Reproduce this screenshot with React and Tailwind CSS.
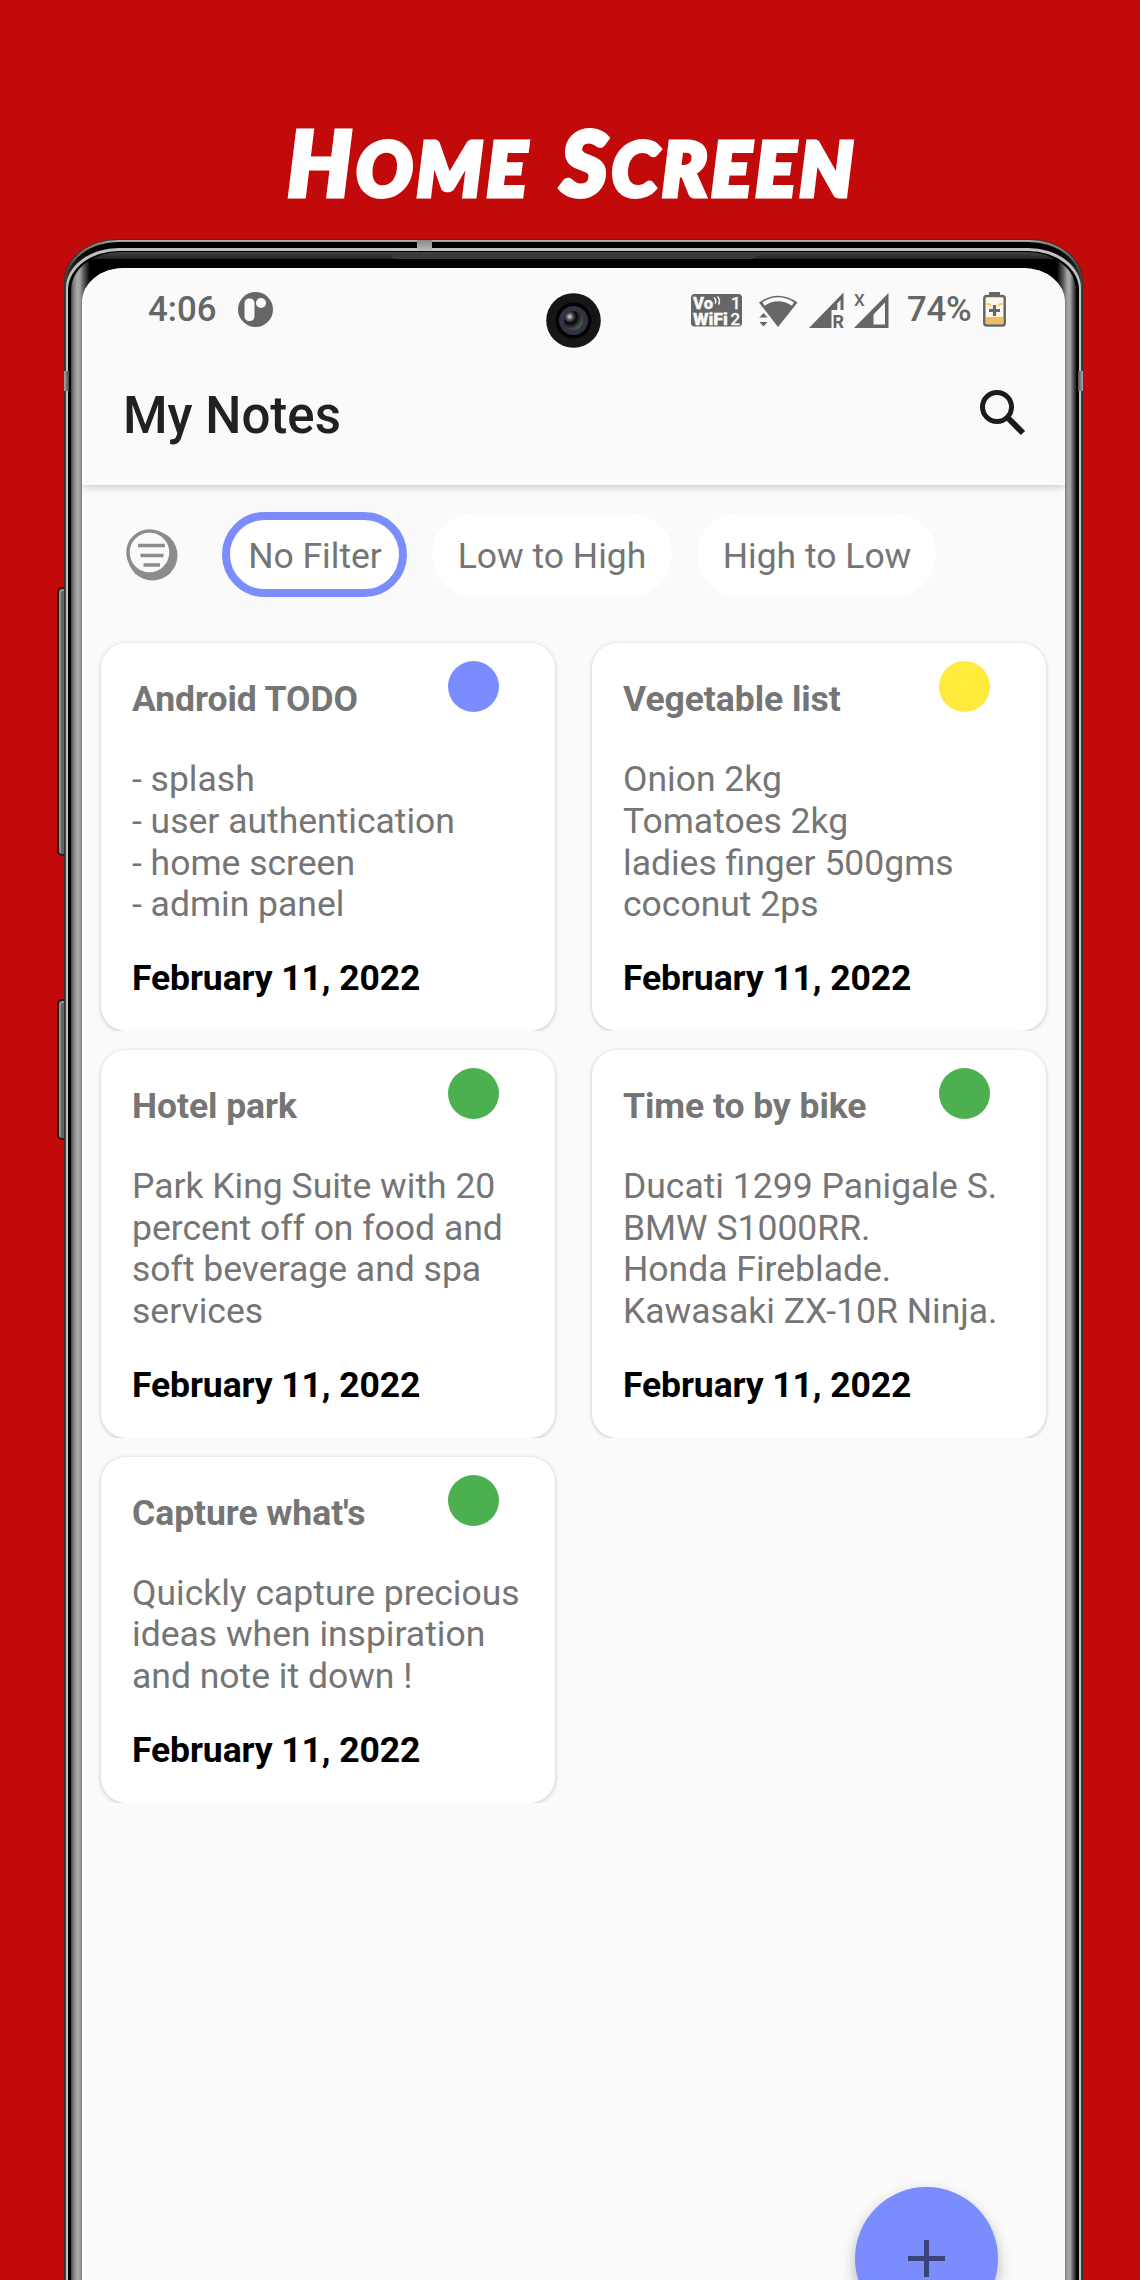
import React from "react";

const notes = [
  { title: "Android TODO", dot: "bg-[#7b8cff]", lines: ["- splash", "- user authentication", "- home screen", "- admin panel"] },
  { title: "Vegetable list", dot: "bg-[#ffeb3b]", lines: ["Onion 2kg", "Tomatoes 2kg", "ladies finger 500gms", "coconut 2ps"] },
  { title: "Hotel park", dot: "bg-[#4caf50]", lines: ["Park King Suite with 20", "percent off on food and", "soft beverage and spa", "services"] },
  { title: "Time to by bike", dot: "bg-[#4caf50]", lines: ["Ducati 1299 Panigale S.", "BMW S1000RR.", "Honda Fireblade.", "Kawasaki ZX-10R Ninja."] },
  { title: "Capture what's", dot: "bg-[#4caf50]", lines: ["Quickly capture precious", "ideas when inspiration", "and note it down !"] },
];

function Heading() {
  return (
    <h1 className="relative z-10 flex h-[239px] items-end justify-center gap-[30px] pb-[23px] pl-[5px] font-['Lato'] text-[74px] leading-[96px] font-black text-white italic [-webkit-text-stroke:5px_white]">
      <span className="tracking-[4.500px]"><span className="text-[89px]">H</span>OME</span>
      <span className="tracking-[4.500px]"><span className="text-[89px]">S</span>CREEN</span>
    </h1>
  );
}

function StatusBar() {
  return (
    <div className="flex h-[83px] items-center pl-[66px] text-[34.800px] leading-none font-medium text-[#666]">
      <span className="w-[90px]">4:06</span>
      <svg className="h-[35px] w-[35px]" viewBox="0 0 35 35">
        <circle cx="17.500" cy="17.500" r="17.500" fill="#666" />
        <rect x="6.500" y="6.500" width="10" height="22.500" rx="4.500" fill="#fafafa" />
        <circle cx="23" cy="11" r="5" fill="#fafafa" />
      </svg>
      <svg className="ml-[418px] h-[36px] w-[198px] overflow-visible" viewBox="691 291.500 198 36" fontFamily="Roboto" fill="#666">
        <rect x="691" y="293.500" width="51" height="32.500" rx="3.500" />
        <g fill="#fafafa" fontWeight="900" stroke="#fafafa" strokeWidth=".3">
          <text x="693" y="308.500" fontSize="17" textLength="20" lengthAdjust="spacingAndGlyphs">Vo</text>
          <text x="731" y="308.500" fontSize="17" fontWeight="500">1</text>
          <text x="693" y="324.500" fontSize="17" textLength="35" lengthAdjust="spacingAndGlyphs">WiFi</text>
          <text x="730.500" y="324.500" fontSize="17" fontWeight="500">2</text>
        </g>
        <path d="M714 297q3 3 1 6M717.500 296q3.500 4 1 8" fill="none" stroke="#fafafa" strokeWidth="1.500" />
        <path d="M759 302Q778 288.500 797.500 302L778 326.500Z" />
        <path d="M763.500 303.500Q778 294 793 303.500" fill="none" stroke="#fafafa" strokeWidth="4" />
        <path d="M763.500 312l5 5.500h-10zM763.500 326.500l5-5.500h-10z" stroke="#fafafa" strokeWidth="1" />
        <path d="M809 327.500L843.500 292V309.500H831.500V327.500Z" />
        <path d="M837.300 303l3.200-3.500V310H837.300z" fill="#fafafa" />
        <text x="832.500" y="327" fontSize="18" fontWeight="700">R</text>
        <path fillRule="evenodd" d="M854 327.500L888.500 292.500V327.500ZM873.500 324h11.500V302L873.500 314z" />
        <text x="854" y="305" fontSize="17" fontWeight="500">X</text>
      </svg>
      <span className="ml-[18px] w-[76px] tracking-[-0.3px]">74%</span>
      <svg className="h-[35px] w-[23px]" viewBox="0 0 23 35">
        <path d="M6 0h11v4H6z" fill="#666" />
        <rect x="1.300" y="4" width="20.400" height="29.500" rx="2.500" fill="#fdf8ea" stroke="#666" strokeWidth="2.500" />
        <path d="M3 25h17v7H3z" fill="#f0bd62" />
        <path d="M3 12h3l2 2M20 12h-3l-2 2" fill="none" stroke="#f3cf83" strokeWidth="2" />
        <path d="M11.500 13v11M6 18.500h11" stroke="#666" strokeWidth="3.200" />
      </svg>
    </div>
  );
}

function Filters() {
  return (
    <div className="flex items-center pt-[27px] pl-[44px] text-[35.500px] leading-[87px] text-[#757575]">
      <svg className="mr-[44px] h-[52px] w-[52px]" viewBox="0 0 52 52">
        <circle cx="26.500" cy="26.500" r="25" fill="#8c8c8c" />
        <circle cx="23.500" cy="23.500" r="21.500" fill="#fafafa" stroke="#8c8c8c" strokeWidth="3.500" />
        <path d="M12 16.500h27M14.500 26.500h23M17.500 36h16.500" stroke="#8c8c8c" strokeWidth="3.500" />
      </svg>
      <div className="flex h-[85px] w-[185px] items-center justify-center rounded-full border-[8px] border-[#7b8cff] bg-white pt-[4px] pl-[1px] whitespace-nowrap">No Filter</div>
      <div className="ml-[25px] flex h-[84px] w-[240px] items-center justify-center rounded-full bg-white pt-[4px]">Low to High</div>
      <div className="ml-[25px] flex h-[84px] w-[239px] items-center justify-center rounded-full bg-white pt-[4px] pl-[1px]">High to Low</div>
    </div>
  );
}

function Note({ note }) {
  return (
    <div className="overflow-hidden px-1 pt-1">
      <article className="flex flex-col rounded-[25px] bg-white px-[31px] pt-[36px] pb-[31px] text-[35.500px] leading-[41.800px] text-[#757575] shadow-[0_1px_4px_rgba(0,0,0,0.22)]">
        <div className="flex h-[42px] justify-between pr-[25px]">
          <h2 className="font-bold tracking-[-0.05px]">{note.title}</h2>
          <span className={"-mt-[18px] h-[51px] w-[51px] rounded-full " + note.dot} />
        </div>
        <div className="mt-[38px] whitespace-nowrap">
          {note.lines.map((l) => <p key={l}>{l}</p>)}
        </div>
        <time className="mt-[32px] font-bold tracking-[-0.1px] text-black">February 11, 2022</time>
      </article>
    </div>
  );
}

function Screen() {
  return (
    <div className="relative h-[2012px] overflow-hidden rounded-t-[42px_34px] bg-[#fafafa] font-['Roboto']">
      <header className="h-[217px] bg-[#fafafa] shadow-[0_2px_8px_rgba(0,0,0,0.2)]">
        <StatusBar />
        <div className="flex items-center justify-between pt-[33px] pr-[39px] pl-[41px]">
          <div className="text-[51px] leading-[64px] font-medium text-[#212121]">My Notes</div>
          <svg className="-mt-[7px] h-[47px] w-[47px]" viewBox="0 0 47 47" fill="none" stroke="#1b1b1b">
            <circle cx="18" cy="18" r="14.500" strokeWidth="5" />
            <path d="M29 29L44 44" strokeWidth="6" />
          </svg>
        </div>
      </header>
      <Filters />
      <div className="grid grid-cols-[462px_462px] items-start gap-x-[29px] gap-y-[14.800px] pt-[42px] pl-[15px]">
        {notes.map((n) => <Note key={n.title} note={n} />)}
      </div>
      <svg className="absolute top-[25px] left-[464px] h-[55px] w-[55px]" viewBox="0 0 55 55">
        <defs>
          <radialGradient id="lens" cx=".3" cy=".3" r=".7">
            <stop offset="0" stopColor="#ddd" />
            <stop offset=".25" stopColor="#555" />
            <stop offset=".5" stopColor="#050505" />
            <stop offset="1" stopColor="#465a50" />
          </radialGradient>
        </defs>
        <circle cx="27.500" cy="27.500" r="27.300" fill="#141617" />
        <circle cx="27.500" cy="27.500" r="18" fill="#020202" />
        <circle cx="27.500" cy="27.500" r="14.500" fill="#353145" />
        <circle cx="27.500" cy="27.500" r="9.500" fill="url(#lens)" />
      </svg>
      <button className="absolute top-[1919px] left-[773px] flex h-[143px] w-[143px] items-center justify-center rounded-full bg-[#7b8cff] shadow-[0_6px_14px_rgba(0,0,0,0.28)]">
        <svg className="h-[37px] w-[37px]" viewBox="0 0 37 37">
          <path d="M18.500 0v37M0 18.500h37" stroke="#3c437a" strokeWidth="5" />
        </svg>
      </button>
    </div>
  );
}

export default function App() {
  return (
    <main className="h-[2280px] w-[1140px] overflow-hidden bg-[#c20a0a] font-['Roboto',sans-serif]">
      <Heading />
      <div className="relative ml-[64px] w-[1019px]">
        <div className="absolute top-[348px] -left-[7px] h-[269px] w-[10px] rounded-l-[5px] border-2 border-[#2b1a1a] bg-[#606464] shadow-[inset_2px_2px_0_#8c9090]" />
        <div className="absolute top-[760px] -left-[7px] h-[141px] w-[10px] rounded-l-[5px] border-2 border-[#2b1a1a] bg-[#606464] shadow-[inset_2px_2px_0_#8c9090]" />
        <div className="relative rounded-t-[54px_42px] bg-[#333] px-[1px] pt-[1px]">
          <div className="rounded-t-[53px_41px] bg-[linear-gradient(#b5b5a8_0,#8a8a80_3px,#444_30px)] px-[1px] pt-[2px]">
            <div className="rounded-t-[53px_41px] bg-[linear-gradient(#000_0,#000_8px,#555_50px)] pt-[6px]">
              <div className="rounded-t-[53px_40px] bg-[#bfc1bf] px-[2px] pt-[3px]">
                <div className="rounded-t-[51px_39px] bg-black px-[3px] pt-[1px]">
                  <div className="overflow-hidden rounded-t-[49px_38px] bg-[linear-gradient(to_right,#444_0,#777_2px,#a8a8a8_6px,#a0a0a0_9px,#666_12px,#000_19px,#000_calc(100%-19px),#666_calc(100%-12px),#a0a0a0_calc(100%-9px),#a8a8a8_calc(100%-6px),#444_calc(100%-2px),#222_100%)] px-[11px]">
                    <div className="px-[10px]">
                      <div className="h-[7px] bg-[linear-gradient(#444,#222)]" />
                    </div>
                    <div className="h-[9px]" />
                    <Screen />
                  </div>
                </div>
              </div>
            </div>
          </div>
          <span className="absolute top-[1px] left-[353px] h-[11px] w-[15px] bg-[linear-gradient(#888,#bbb)]" />
          <span className="absolute top-[132px] left-0 h-[20px] w-[5px] bg-[linear-gradient(to_right,#aaa,#444)]" />
          <span className="absolute top-[132px] right-0 h-[20px] w-[5px] bg-[linear-gradient(to_right,#555,#aaa)]" />
          <span className="absolute top-[14px] left-[326px] h-[6px] w-[367px] rounded-b-[6px] bg-[#3a3a3a]" />
        </div>
      </div>
    </main>
  );
}
